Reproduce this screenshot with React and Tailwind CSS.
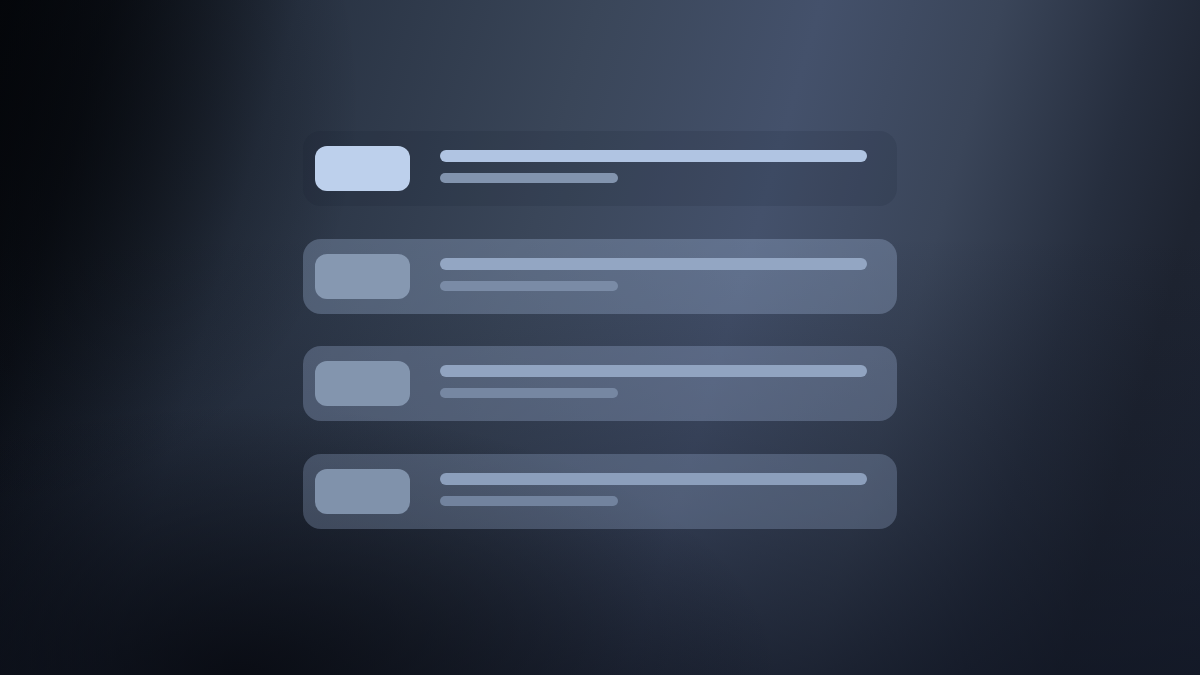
const rows = [
  { card: 'bg-[#0f172a]/[0.12]', thumb: 'bg-[#bdd0ec]', line1: 'bg-[#b0c4e2]', line2: 'bg-[#8294ae]' },
  { card: 'bg-[#a3b7da]/[0.32]', thumb: 'bg-[#8698b1]', line1: 'bg-[#93a6c3]', line2: 'bg-[#7a8ba6]' },
  { card: 'bg-[#a3b7da]/[0.30]', thumb: 'bg-[#8395ae]', line1: 'bg-[#91a4c1]', line2: 'bg-[#7687a2]' },
  { card: 'bg-[#a3b7da]/[0.28]', thumb: 'bg-[#8092ab]', line1: 'bg-[#8c9fbc]', line2: 'bg-[#72839e]' },
];

function SkeletonRow({ row }) {
  return (
    <div className={`flex items-center h-[75px] w-[594px] rounded-[18px] pl-3 pr-[30px] ${row.card}`}>
      <div className={`w-[95px] h-[45px] rounded-[12px] shrink-0 ${row.thumb}`} />
      <div className="flex-1 ml-[30px] mb-1 flex flex-col">
        <div className={`h-[12px] w-full rounded-full ${row.line1}`} />
        <div className={`h-[10px] w-[178px] mt-[11px] rounded-full ${row.line2}`} />
      </div>
    </div>
  );
}

export default function App() {
  return (
    <div className="relative w-full h-[675px] overflow-hidden bg-[#1c2434] bg-[radial-gradient(ellipse_45%_40%_at_20%_100%,rgba(6,8,14,0.8)_0%,rgba(6,8,14,0)_100%),radial-gradient(ellipse_30%_60%_at_0%_15%,rgba(4,6,10,0.7)_0%,rgba(4,6,10,0)_100%),linear-gradient(to_bottom,rgba(14,19,32,0)_0%,rgba(14,19,32,0)_35%,rgba(14,19,32,0.35)_75%,rgba(14,19,32,0.68)_100%),linear-gradient(106deg,#04060a_0%,#0c1017_8%,#283242_21.5%,#3a4659_43%,#44516b_59%,#3a4559_72%,#262e3e_83%,#1e2431_90%,#1f2636_100%)]">
      <div className="flex flex-col items-center gap-[32.7px] pt-[131px]">
        {rows.map((row, i) => (
          <SkeletonRow key={i} row={row} />
        ))}
      </div>
    </div>
  );
}
